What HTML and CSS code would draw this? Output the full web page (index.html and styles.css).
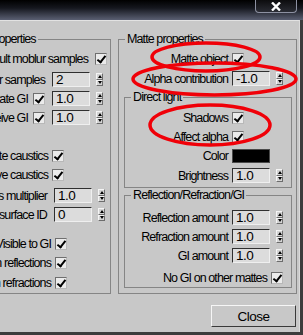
FILE: index.html
```html
<!DOCTYPE html>
<html lang="en">
<head>
    <meta charset="UTF-8">
    <title>Object properties</title>
    <link rel="stylesheet" href="styles.css">
</head>
<body>
    <div class="titlebar">
        <div class="title-close">
            <svg width="10" height="9" viewBox="0 0 10 9"><path d="M1 0.5 L9 8.5 M9 0.5 L1 8.5" stroke="#fff" stroke-width="2.4"/></svg>
        </div>
    </div>

    <div class="window">
        <div class="panels">
            <!-- left group, cut off by the screen edge -->
            <fieldset class="group group-left">
                <legend>V-Ray properties</legend>
                <div class="row pad-a"><span>Use default moblur samples</span><span class="check"></span></div>
                <div class="row pad-b mt-2"><span>Moblur samples</span><span class="num">2</span><span class="spin"><i></i><i></i></span></div>
                <div class="row pad-b"><span class="gap-c">Generate GI</span><span class="check"></span><span class="num">1.0</span><span class="spin"><i></i><i></i></span></div>
                <div class="row pad-b"><span class="gap-c">Receive GI</span><span class="check"></span><span class="num">1.0</span><span class="spin"><i></i><i></i></span></div>
                <div class="row pad-d tight mt-19"><span>Generate caustics</span><span class="check"></span></div>
                <div class="row pad-d tight"><span>Receive caustics</span><span class="check"></span></div>
                <div class="row pad-e mt-2"><span>Caustics multiplier</span><span class="num">1.0</span><span class="spin"><i></i><i></i></span></div>
                <div class="row pad-e"><span>Matte surface ID</span><span class="num">0</span><span class="spin"><i></i><i></i></span></div>
                <div class="row pad-f tight mt-10"><span>Visible to GI</span><span class="check"></span></div>
                <div class="row pad-f tight"><span>Visible in reflections</span><span class="check"></span></div>
                <div class="row pad-f tight mt-1"><span>Visible in refractions</span><span class="check"></span></div>
            </fieldset>

            <fieldset class="group group-right">
                <legend>Matte properties</legend>
                <div class="row form-row"><span>Matte object</span><span class="ctl"><span class="check"></span></span></div>
                <div class="row form-row mt-1"><span>Alpha contribution</span><span class="ctl"><span class="num">-1.0</span><span class="spin"><i></i><i></i></span></span></div>

                <fieldset class="group sub-group direct-light">
                    <legend>Direct light</legend>
                    <div class="row sub-row"><span>Shadows</span><span class="ctl"><span class="check"></span></span></div>
                    <div class="row sub-row"><span>Affect alpha</span><span class="ctl"><span class="check"></span></span></div>
                    <div class="row sub-row"><span>Color</span><span class="ctl"><span class="swatch"></span></span></div>
                    <div class="row sub-row mt-1"><span>Brightness</span><span class="ctl"><span class="num">1.0</span><span class="spin"><i></i><i></i></span></span></div>
                </fieldset>

                <fieldset class="group sub-group reflection">
                    <legend>Reflection/Refraction/GI</legend>
                    <div class="row sub-row"><span>Reflection amount</span><span class="ctl"><span class="num">1.0</span><span class="spin"><i></i><i></i></span></span></div>
                    <div class="row sub-row"><span>Refraction amount</span><span class="ctl"><span class="num">1.0</span><span class="spin"><i></i><i></i></span></span></div>
                    <div class="row sub-row"><span>GI amount</span><span class="ctl"><span class="num">1.0</span><span class="spin"><i></i><i></i></span></span></div>
                    <div class="row sub-row tight mt-3"><span>No GI on other mattes</span><span class="check"></span></div>
                </fieldset>
            </fieldset>
        </div>

        <div class="footer">
            <button class="close-btn">Close</button>
        </div>
    </div>

    <!-- red marks drawn over the dialog -->
    <svg class="marks" width="303" height="335" viewBox="0 0 303 335">
        <ellipse cx="206" cy="57" rx="54" ry="14" />
        <ellipse cx="214.5" cy="79" rx="81.5" ry="16" />
        <ellipse cx="210" cy="125" rx="60" ry="20" />
    </svg>
</body>
</html>
```

FILE: styles.css
```css
* {
    box-sizing: border-box;
}

body {
    margin: 0;
    width: 303px;
    height: 335px;
    overflow: hidden;
    position: relative;
    background-color: #3c3c3c;
    font-family: "Liberation Sans", Arial, sans-serif;
    font-size: 12.5px;
    letter-spacing: -0.9px;
    color: #000;
}

/* Title bar */
.titlebar {
    height: 20px;
    background: linear-gradient(#000, #15171e 40%, #5a5f72);
    display: flex;
    justify-content: flex-end;
    padding-right: 6px;
}

.title-close {
    width: 42px;
    height: 13px;
    border: 1px solid #8d91a2;
    border-top: none;
    border-radius: 0 0 4px 4px;
    background: linear-gradient(#0c0c0e, #2a2c34);
    display: flex;
    justify-content: center;
    align-items: center;
}

/* Dialog body */
.window {
    width: 300px;
    height: 312px;
    background-color: #c8c8c8;
    border-top: 1px solid #e2e2e2;
    border-right: 1px solid #dadada;
}

.panels {
    display: flex;
    gap: 7px;
    padding-top: 11px;
}

.group {
    margin: 0;
    padding: 0;
    min-width: 0;
    border: 1px solid #858585;
}

.group legend {
    padding: 0 2px;
    margin-left: 6px;
    line-height: 14px;
}

.group-left {
    margin-left: -52px;
    width: 163px;
    height: 262px;
    padding-top: 3px;
    overflow: hidden;
}

.group-right {
    width: 179px;
    height: 262px;
    padding-top: 3px;
}

.sub-group {
    margin: 2px 4px 0 5px;
}

.direct-light {
    padding: 4px 0 2px;
}

.reflection {
    margin-top: 0;
    padding-top: 6px;
}

/* Rows */
.row {
    display: flex;
    align-items: center;
    justify-content: flex-end;
    gap: 7px;
    height: 19px;
    white-space: nowrap;
}

.row.tight {
    gap: 4px;
}

.gap-c {
    margin-right: -2px;
}

.pad-a { padding-right: 3px; }
.pad-b { padding-right: 7px; }
.pad-d { padding-right: 46px; }
.pad-e { padding-right: 5px; }
.pad-f { padding-right: 43px; }

.mt-1 { margin-top: 1px; }
.mt-2 { margin-top: 2px; }
.mt-3 { margin-top: 3px; }
.mt-10 { margin-top: 10px; }
.mt-19 { margin-top: 19px; }

.form-row {
    gap: 4px;
    padding-right: 13px;
}

.sub-row {
    gap: 4px;
    padding-right: 8px;
}

.ctl {
    width: 51px;
    display: flex;
    align-items: center;
}

/* Controls */
.check {
    position: relative;
    flex: none;
    width: 12px;
    height: 12px;
    background-color: #ebebeb;
    border: 1px solid;
    border-color: #6f6f6f #b8b8b8 #b8b8b8 #6f6f6f;
}

.check::after {
    content: "";
    position: absolute;
    left: 3px;
    top: 0;
    width: 3px;
    height: 7px;
    border: solid #000;
    border-width: 0 2px 2px 0;
    transform: rotate(38deg);
}

.num {
    flex: none;
    width: 38px;
    height: 15px;
    padding-left: 3px;
    line-height: 13px;
    font-size: 13.5px;
    letter-spacing: -0.5px;
    background-color: #dcdcdc;
    border: 1px solid;
    border-color: #2f2f2f #efefef #efefef #2f2f2f;
}

.spin {
    flex: none;
    width: 7px;
    height: 13px;
    margin-left: -1px;
    display: flex;
    flex-direction: column;
}

.spin i {
    flex: 1;
    background-color: #d4d4d4;
    border: 1px solid;
    border-color: #f4f4f4 #6c6c6c #6c6c6c #f4f4f4;
    display: flex;
    align-items: center;
    justify-content: center;
}

.spin i::after {
    content: "";
    border-left: 2px solid transparent;
    border-right: 2px solid transparent;
    border-bottom: 3px solid #000;
}

.spin i + i::after {
    border-bottom: none;
    border-top: 3px solid #000;
}

.ctl .spin {
    margin-left: 6px;
}

.swatch {
    width: 38px;
    height: 14px;
    background-color: #000;
    border: 1px solid #4a4a4a;
}

/* Footer */
.footer {
    display: flex;
    justify-content: flex-end;
    padding-right: 3px;
    margin-top: 11px;
}

.close-btn {
    width: 85px;
    height: 22px;
    padding: 0;
    background-color: #c8c8c8;
    border: 1px solid;
    border-color: #f6f6f6 #3a3a3a #3a3a3a #f6f6f6;
    font-family: inherit;
    font-size: 13.5px;
    letter-spacing: -0.5px;
    color: #000;
}

/* Red annotation marks */
.marks {
    position: absolute;
    left: 0;
    top: 0;
    pointer-events: none;
}

.marks ellipse {
    fill: none;
    stroke: #f00008;
    stroke-width: 3.5;
}
```
